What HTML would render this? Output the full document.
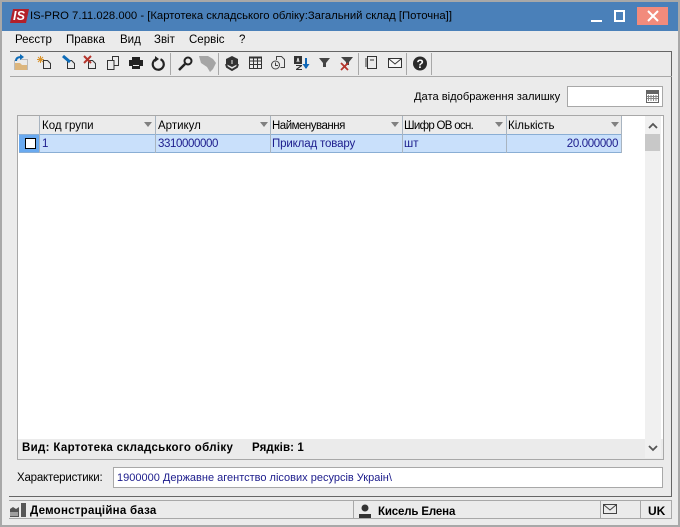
<!DOCTYPE html>
<html><head><meta charset="utf-8">
<style>
html,body{margin:0;padding:0;width:680px;height:527px;overflow:hidden;background:#ebebeb}
*{box-sizing:border-box}
body{font-family:"Liberation Sans",Arial,sans-serif;font-size:11.5px;color:#000;position:relative}
.a{position:absolute}
.t{position:absolute;white-space:nowrap;line-height:14px}
.v{color:#1c1c8c}
.b{font-weight:bold}
svg{position:absolute;overflow:visible}
.arr{position:absolute;width:0;height:0;border-left:4px solid transparent;border-right:4px solid transparent;border-top:5px solid #808080}
</style></head><body>
<div class="a" style="left:0;top:0;width:680px;height:527px;background:#a8a8a8"></div>
<div class="a" style="left:2px;top:2px;width:676px;height:523px;background:#ebebeb"></div>
<div class="a" style="left:2px;top:2px;width:676px;height:29px;background:#4a80b9"></div>
<div class="a" style="left:10px;top:9px;width:19px;height:14px;background:#b3202a;clip-path:polygon(3px 0,100% 0,16px 100%,0 100%)"></div>
<div class="t b" style="left:13px;top:9px;color:#fff;font-size:12.500px;font-style:italic;letter-spacing:.2px">IS</div>
<div class="t" style="left:30px;top:9px;font-size:11.300px">IS-PRO 7.11.028.000 - [Картотека складського обліку:Загальний склад [Поточна]]</div>
<div class="a" style="left:591px;top:20px;width:11px;height:2px;background:#fff"></div>
<div class="a" style="left:614px;top:10px;width:11px;height:12px;border:2px solid #fff"></div>
<div class="a" style="left:637px;top:7px;width:31px;height:18px;background:#f28b7c"></div>
<svg style="left:647px;top:10px" width="12" height="12"><path d="M1 1L11 11M11 1L1 11" stroke="#fff" stroke-width="2"/></svg>

<div class="t" style="left:15px;top:33px">Реєстр</div>
<div class="t" style="left:66px;top:33px">Правка</div>
<div class="t" style="left:120px;top:33px">Вид</div>
<div class="t" style="left:154px;top:33px">Звіт</div>
<div class="t" style="left:189px;top:33px">Сервіс</div>
<div class="t" style="left:239px;top:33px">?</div>

<div class="a" style="left:10px;top:51px;width:662px;height:1px;background:#666"></div>
<div class="a" style="left:671px;top:51px;width:1px;height:446px;background:#666"></div>
<div class="a" style="left:10px;top:76px;width:662px;height:1px;background:#a8a8a8"></div>
<div class="a" style="left:170px;top:53px;width:1px;height:22px;background:#a8a8a8"></div>
<div class="a" style="left:218px;top:53px;width:1px;height:22px;background:#a8a8a8"></div>
<div class="a" style="left:358px;top:53px;width:1px;height:22px;background:#a8a8a8"></div>
<div class="a" style="left:406px;top:53px;width:1px;height:22px;background:#a8a8a8"></div>
<div class="a" style="left:431px;top:53px;width:1px;height:22px;background:#a8a8a8"></div>

<!-- toolbar icons -->
<svg style="left:0;top:0" width="680" height="80" fill="none">
<path d="M15 63h5l2 2h6v5H15z" fill="#dcb67e"/><path d="M20 59.500h7.500V70M14.500 60v10" stroke="#bbb"/>
<path d="M16 61c0-3 2-4 5-4" stroke="#0e6cb8" stroke-width="2"/><path d="M20 54l4 3-4 3z" fill="#0e6cb8"/>
<path d="M43.500 60.500h4l3 3v5h-7z" stroke="#333"/><path d="M37 59.500h7M40.500 56v7M38 57l5 5M43 57l-5 5" stroke="#d8922a"/>
<path d="M67.500 60.500h4l3 3v5h-7z" stroke="#333"/><path d="M63 56l7 6" stroke="#0e6cb8" stroke-width="3"/>
<path d="M88.500 60.500h4l3 3v5h-7z" stroke="#333"/><path d="M84 56l7 7M91 56l-7 7" stroke="#b5352c" stroke-width="2"/>
<path d="M112.500 60v-3.500h6v9h-4M107.500 60.500h6.500v9h-6.500z" stroke="#333"/>
<path d="M132 57h8v3h-8z" fill="#222"/><path d="M129 60h14v6h-14z" fill="#222"/><path d="M132 65h8v4h-8z" fill="#222"/><path d="M133 65.500h6" stroke="#ebebeb"/>
<path d="M156.500 59a5.500 5.500 0 1 0 4 .2" stroke="#222" stroke-width="2.200"/><path d="M155 56v6l4-3z" fill="#222"/>
<circle cx="188" cy="61" r="3.500" stroke="#222" stroke-width="2"/><path d="M185 64l-6 6" stroke="#222" stroke-width="2.500"/>
<path d="M199 56h9l5 3 3 4-3 6-3 3-3-5-6-4z" fill="#a5a5a5"/>
<path d="M232 56l6 3v5l-6 3-6-3v-5z" fill="#333"/><path d="M226 64l1 3 5 3 5-3 1-3" stroke="#333" stroke-width="2"/><path d="M232 60v4" stroke="#ebebeb"/>
<path d="M249.500 57.500h12v11h-12zM250 61h11M250 64.500h11M253.500 58v10M257.500 58v10" stroke="#333"/><path d="M249 57.500h13" stroke="#333" stroke-width="2"/>
<path d="M276.500 60v-3.500h5l3 3v8h-4" stroke="#444"/><circle cx="275.500" cy="65" r="4" stroke="#444"/><path d="M275.500 62.500v3h2.500" stroke="#444"/>
<path d="M294 56h8v8h-8z" fill="#333"/><path d="M296 65h6v1l-4 3h4v1h-6v-1l4-3h-4z" fill="#333"/><path d="M297 62l1-4 1 4" stroke="#ebebeb"/>
<path d="M306 58v10" stroke="#1068b8" stroke-width="2"/><path d="M302.500 64l3.500 5 3.500-5z" fill="#1068b8"/>
<path d="M319 58h11l-4 5v4h-3v-4z" fill="#444"/>
<path d="M341 57h12l-4 5v3h-3v-3z" fill="#444"/><path d="M341 63l7 7M348 63l-7 7" stroke="#b5352c" stroke-width="1.800"/>
<path d="M367.500 56.500h9v12h-9z" stroke="#333"/><path d="M366 58v9" stroke="#333"/><path d="M370 60h4" stroke="#333"/>
<path d="M388.500 58.500h13v9h-13z" fill="#f6f6f6"/><path d="M388.500 58.500h13v9h-13zM389 59l6 5 6-5" stroke="#333"/>
<circle cx="420" cy="63.500" r="7" fill="#2b2b2b"/>
</svg>
<div class="t b" style="left:416.500px;top:56.500px;color:#fff;font-size:12px">?</div>

<!-- date -->
<div class="t" style="left:414px;top:90px;font-size:11.150px">Дата відображення залишку</div>
<div class="a" style="left:567px;top:86px;width:96px;height:21px;background:#fff;border:1px solid #a8a8a8"></div>
<svg style="left:646px;top:90px" width="14" height="13"><rect x="0" y="0" width="13" height="13" fill="#666"/><rect x="1" y="4" width="11" height="8" fill="#fff"/><path d="M2.500 5v6M5 5v6M7.500 5v6M10 5v6" stroke="#888"/><path d="M1 6.500h11M1 8.500h11" stroke="#888"/></svg>

<!-- table -->
<div class="a" style="left:17px;top:115px;width:647px;height:345px;background:#ebebeb;border:1px solid #a8a8a8"></div>
<div class="a" style="left:18px;top:116px;width:645px;height:323px;background:#fff"></div>
<div class="a" style="left:18px;top:116px;width:604px;height:19px;background:#ebebeb"></div>
<div class="a" style="left:19px;top:134px;width:603px;height:19px;background:#c9e0fb;border-top:1px solid #8aaed4;border-bottom:1px solid #8aaed4"></div>
<div class="a" style="left:19px;top:135px;width:20px;height:17px;background:#6aaaf0"></div>
<div class="a" style="left:25px;top:138px;width:11px;height:11px;background:#fff;border:1px solid #000"></div>
<div class="a" style="left:39px;top:116px;width:1px;height:37px;background:#a8b4c0"></div>
<div class="a" style="left:155px;top:116px;width:1px;height:37px;background:#a8b4c0"></div>
<div class="a" style="left:270px;top:116px;width:1px;height:37px;background:#a8b4c0"></div>
<div class="a" style="left:402px;top:116px;width:1px;height:37px;background:#a8b4c0"></div>
<div class="a" style="left:506px;top:116px;width:1px;height:37px;background:#a8b4c0"></div>
<div class="a" style="left:621px;top:116px;width:1px;height:37px;background:#a8b4c0"></div>
<div class="t" style="left:42px;top:119px">Код групи</div>
<div class="t" style="left:158px;top:119px">Артикул</div>
<div class="t" style="left:272px;top:119px;letter-spacing:-.5px">Найменування</div>
<div class="t" style="left:404px;top:119px;letter-spacing:-.7px">Шифр ОВ осн.</div>
<div class="t" style="left:508px;top:119px">Кількість</div>
<div class="arr" style="left:144px;top:122px"></div>
<div class="arr" style="left:260px;top:122px"></div>
<div class="arr" style="left:391px;top:122px"></div>
<div class="arr" style="left:495px;top:122px"></div>
<div class="arr" style="left:611px;top:122px"></div>
<div class="t v" style="left:42px;top:137px">1</div>
<div class="t v" style="left:158px;top:137px;letter-spacing:-.4px">3310000000</div>
<div class="t v" style="left:272px;top:137px;letter-spacing:-.15px">Приклад товару</div>
<div class="t v" style="left:404px;top:137px">шт</div>
<div class="t v" style="left:506px;top:137px;width:112px;text-align:right;letter-spacing:-.35px">20.000000</div>
<!-- scrollbar -->
<div class="a" style="left:645px;top:116px;width:16px;height:342px;background:#f0f0f0"></div>
<div class="a" style="left:645px;top:134px;width:15px;height:17px;background:#c8c8c8"></div>
<svg style="left:648px;top:122px" width="10" height="8"><path d="M1 6l4-4 4 4" stroke="#555" stroke-width="1.800" fill="none"/></svg>
<svg style="left:648px;top:445px" width="10" height="8"><path d="M1 1l4 4 4-4" stroke="#555" stroke-width="1.800" fill="none"/></svg>
<div class="t b" style="left:22px;top:441px;letter-spacing:.33px">Вид: Картотека складського обліку</div>
<div class="t b" style="left:252px;top:441px;letter-spacing:.1px">Рядків: 1</div>

<!-- chars -->
<div class="t" style="left:17px;top:471px;letter-spacing:-.2px">Характеристики:</div>
<div class="a" style="left:113px;top:467px;width:550px;height:21px;background:#fff;border:1px solid #a8a8a8"></div>
<div class="t v" style="left:117px;top:471px;font-size:11px">1900000 Державне агентство лісових ресурсів Украін\</div>

<!-- status -->
<div class="a" style="left:9px;top:496px;width:663px;height:1px;background:#666"></div>
<div class="a" style="left:9px;top:500px;width:663px;height:1px;background:#a8a8a8"></div>
<div class="a" style="left:9px;top:518px;width:663px;height:1px;background:#a8a8a8"></div>
<div class="a" style="left:353px;top:500px;width:1px;height:19px;background:#a8a8a8"></div>
<div class="a" style="left:600px;top:500px;width:1px;height:19px;background:#a8a8a8"></div>
<div class="a" style="left:640px;top:500px;width:1px;height:19px;background:#a8a8a8"></div>
<div class="a" style="left:671px;top:500px;width:1px;height:19px;background:#a8a8a8"></div>
<svg style="left:10px;top:503px" width="17" height="14"><path d="M0 6l3-2 3 2 3-2v10H0z" fill="#555"/><path d="M11 0h5v14h-5z" fill="#555"/><path d="M1 9v4M3 9v4M5 9v4M7 9v4" stroke="#ebebeb"/></svg>
<div class="t b" style="left:30px;top:504px;letter-spacing:.25px">Демонстраційна база</div>
<svg style="left:358px;top:504px" width="14" height="14"><circle cx="7" cy="4" r="3.500" fill="#333"/><path d="M1 14v-4h12v4z" fill="#333"/></svg>
<div class="t b" style="left:378px;top:505px;letter-spacing:-.15px">Кисель Елена</div>
<svg style="left:603px;top:504px" width="15" height="11"><path d="M.500.500h13v9H.500zM1 1l6 5 6-5" stroke="#444" fill="none"/></svg>
<div class="t b" style="left:648px;top:504px;font-size:12px">UK</div>
</body></html>
